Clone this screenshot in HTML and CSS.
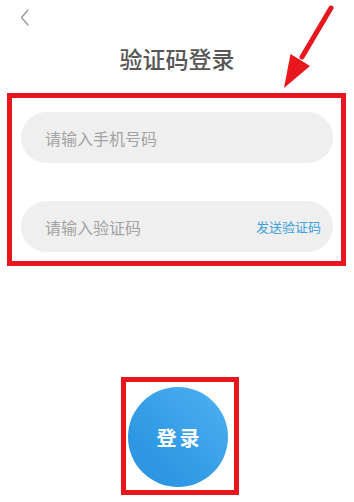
FILE: index.html
```html
<!DOCTYPE html>
<html lang="zh">
<head>
<meta charset="utf-8">
<title>验证码登录</title>
<link rel="stylesheet" href="styles.css">
</head>
<body>
<div class="page">
  <div class="topbar">
    <svg class="back" width="10" height="17" viewBox="0 0 10 17"><polyline points="8,1 1.5,8.5 8,16" fill="none" stroke="#9a9a9a" stroke-width="1.4" stroke-linecap="round" stroke-linejoin="round"/></svg>
  </div>
  <h1 class="title">验证码登录</h1>
  <div class="mark form">
    <div class="field"><span class="ph">请输入手机号码</span></div>
    <div class="field"><span class="ph">请输入验证码</span><span class="send">发送验证码</span></div>
  </div>
  <div class="mark btnwrap">
    <div class="login">登录</div>
  </div>
  <svg class="arrow" width="354" height="100" viewBox="0 0 354 100">
    <line x1="331" y1="8" x2="302" y2="57" stroke="#e8161d" stroke-width="5" stroke-linecap="round"/>
    <polygon points="284,88 290.5,54 310,66" fill="#e8161d"/>
  </svg>
</div>
</body>
</html>
```

FILE: styles.css
```css
* { box-sizing: border-box; }
html, body { margin: 0; padding: 0; background: #fff; }
body { font-family: "Noto Sans CJK SC", "Noto Sans", sans-serif; width: 354px; height: 502px; overflow: hidden; }
.page { position: relative; width: 354px; height: 502px; }
.topbar { height: 35px; padding: 9px 0 0 20px; }
.back { display: block; }
.title { margin: 7px 0 0; height: 32px; line-height: 32px; font-size: 23px; font-weight: 500; color: #575757; text-align: center; }
.mark { border: 5px solid #e8161d; }
.form { margin: 19px 8px 0 7px; padding: 14px 8px 9px 9px; display: flex; flex-direction: column; gap: 38px; }
.field { height: 51px; border-radius: 26px; background: #efefef; display: flex; align-items: center; justify-content: space-between; padding: 0 12px 0 24px; }
.ph { font-size: 16px; color: #a2a2a2; }
.send { font-size: 13px; color: #3b9fe0; }
.btnwrap { width: 118px; height: 118px; margin: 111px 0 0 121px; padding: 5px 4px 4px 2px; }
.login { width: 100px; height: 100px; border-radius: 50%; background: linear-gradient(225deg, #4fb2f1 0%, #2e98e4 70%, #2b95e2 100%); color: #fff; font-size: 20px; font-weight: 700; letter-spacing: 3px; display: flex; align-items: center; justify-content: center; padding-left: 3px; }
.arrow { position: absolute; left: 0; top: 0; pointer-events: none; }
```
